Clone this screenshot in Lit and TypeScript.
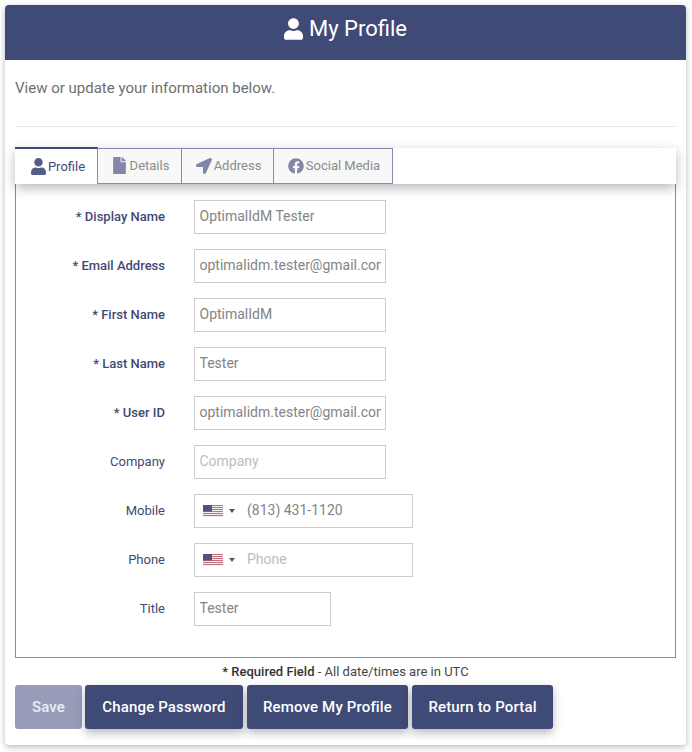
import { LitElement, html, css, svg } from "lit";
import { customElement } from "lit/decorators.js";

const USER = "M224 256c70.7 0 128-57.3 128-128S294.7 0 224 0 96 57.3 96 128s57.3 128 128 128zm89.6 32h-16.7c-22.2 10.2-46.9 16-72.9 16s-50.6-5.8-72.9-16h-16.7C60.2 288 0 348.2 0 422.4V464c0 26.5 21.5 48 48 48h352c26.5 0 48-21.5 48-48v-41.6c0-74.2-60.2-134.4-134.4-134.4z";
const FILE = "M224 136V0H24C10.7 0 0 10.7 0 24v464c0 13.3 10.7 24 24 24h336c13.3 0 24-10.7 24-24V160H248c-13.2 0-24-10.8-24-24zm160-14.1v6.1H256V0h6.1c6.4 0 12.5 2.5 17 7l97.9 98c4.5 4.5 7 10.6 7 16.9z";
const ARROW = "M444.52 3.52L28.74 195.42c-47.97 22.39-31.98 92.75 19.19 92.75h175.91v175.91c0 51.17 70.36 67.17 92.75 19.19l191.9-415.78c15.99-38.39-25.59-79.97-63.97-63.97z";
const FB = "M504 256C504 119 393 8 256 8S8 119 8 256c0 123.78 90.69 226.38 209.25 245V327.69h-63V256h63v-54.64c0-62.15 37-96.48 93.67-96.48 27.14 0 55.52 4.84 55.52 4.84v61h-31.28c-30.8 0-40.41 19.12-40.41 38.73V256h68.78l-11 71.69h-57.78V501C413.31 482.38 504 379.78 504 256z";

const icon = (d: string, vb: string, cls: string) =>
  html`<svg class=${cls} viewBox=${vb} aria-hidden="true"><path fill="currentColor" d=${d}></path></svg>`;

const flag = () => html`<svg class="flag" viewBox="0 0 20 12" aria-hidden="true">
  <rect width="20" height="12" fill="#f3eded"></rect>
  ${[0, 2, 4, 6, 8, 10].map((y) => svg`<rect y=${y} width="20" height="1" fill="#c0717f"></rect>`)}
  <rect width="9" height="6.5" fill="#50527f"></rect>
</svg>`;

interface Row {
  label: string;
  req?: boolean;
  value?: string;
  placeholder?: string;
  kind?: "phone" | "short";
}

const ROWS: Row[] = [
  { label: "Display Name", req: true, value: "OptimalIdM Tester" },
  { label: "Email Address", req: true, value: "optimalidm.tester@gmail.com" },
  { label: "First Name", req: true, value: "OptimalIdM" },
  { label: "Last Name", req: true, value: "Tester" },
  { label: "User ID", req: true, value: "optimalidm.tester@gmail.com" },
  { label: "Company", placeholder: "Company" },
  { label: "Mobile", value: "(813) 431-1120", kind: "phone" },
  { label: "Phone", placeholder: "Phone", kind: "phone" },
  { label: "Title", value: "Tester", kind: "short" },
];

@customElement("app-root")
export class AppRoot extends LitElement {
  static styles = css`
    :host {
      display: block;
      width: 692px;
      height: 752px;
      padding: 5px 6px 7px 5px;
      box-sizing: border-box;
      background: #fff;
      font-family: Roboto, "Liberation Sans", sans-serif;
      overflow: hidden;
    }
    .card {
      height: 740px;
      background: #fff;
      border-radius: 4px;
      box-shadow: 0 2px 6px rgba(0, 0, 0, 0.28);
      display: flex;
      flex-direction: column;
    }
    .head {
      height: 55px;
      box-sizing: border-box;
      padding-bottom: 9px;
      background: #3f4a76;
      border-radius: 4px 4px 0 0;
      color: #fff;
      font-size: 22px;
      display: flex;
      align-items: center;
      justify-content: center;
      gap: 6px;
    }
    .head svg {
      width: 19px;
      height: 22px;
      margin-top: 1px;
    }
    .body {
      padding: 0 10px;
      display: flex;
      flex-direction: column;
    }
    .intro {
      height: 67px;
      box-sizing: border-box;
      padding-top: 18px;
      font-size: 15px;
      line-height: 20px;
      color: #6f6f6f;
      border-bottom: 1px solid #e9e9e9;
    }
    .tabs {
      margin-top: 21px;
      height: 36px;
      display: flex;
      background: #fff;
      box-shadow: 0 4px 12px rgba(0, 0, 0, 0.28);
      position: relative;
      z-index: 1;
    }
    .tab {
      box-sizing: border-box;
      height: 36px;
      display: flex;
      align-items: center;
      justify-content: center;
      gap: 2px;
      padding: 0 0 1px 2px;
      font-size: 13px;
      color: #8c8c8c;
      background: #f8f8f8;
      border: 1px solid #868cb0;
      border-left: none;
    }
    .tab svg {
      color: #8286a8;
    }
    .tab.active {
      background: #fff;
      color: #3f4a76;
      border-top: 2px solid #3f4a76;
      border-bottom: none;
      margin-top: -1px;
      height: 37px;
      padding: 0 0 1px 4px;
    }
    .tab.active svg {
      color: #555e87;
    }
    .i-user { width: 15px; height: 17px; }
    .i-file { width: 13px; height: 17px; margin: 0 2px 0 1px; }
    .i-arrow { width: 16px; height: 16px; }
    .i-fb { width: 16px; height: 16px; }
    .panel {
      height: 474px;
      box-sizing: border-box;
      border: 1px solid #868aa6;
      border-top: none;
      padding-top: 16px;
      display: flex;
      flex-direction: column;
      gap: 15px;
    }
    .row {
      display: flex;
      align-items: center;
      height: 34px;
    }
    .label {
      width: 149px;
      box-sizing: border-box;
      padding-bottom: 2px;
      text-align: right;
      font-size: 13px;
      color: #3f4a76;
      margin-right: 29px;
    }
    .label.req {
      font-weight: 500;
    }
    .field {
      box-sizing: border-box;
      height: 34px;
      width: 192px;
      border: 1px solid #ccc;
      display: flex;
      align-items: center;
      background: #fff;
    }
    .field.phone { width: 219px; }
    .field.short { width: 137px; }
    input {
      flex: 1;
      min-width: 0;
      width: 100%;
      border: none;
      outline: none;
      background: transparent;
      padding: 0 4px 2px 4.5px;
      font: 400 14px Roboto, "Liberation Sans", sans-serif;
      color: #848484;
    }
    input::placeholder { color: #bdbdbd; opacity: 1; }
    .phone input { padding-left: 0; }
    .dial {
      display: flex;
      align-items: center;
      padding-left: 8px;
      width: 44px;
      flex: none;
      box-sizing: content-box;
    }
    .flag { width: 20px; height: 12px; display: block; }
    .caret {
      margin-left: 6px;
      width: 0;
      height: 0;
      border-left: 3px solid transparent;
      border-right: 3px solid transparent;
      border-top: 4px solid #555;
    }
    .note {
      height: 27px;
      box-sizing: border-box;
      padding-top: 6px;
      font-size: 13px;
      line-height: 15px;
      text-align: center;
      color: #444;
    }
    .note b { font-weight: 500; color: #333; }
    .actions {
      display: flex;
      gap: 4px;
    }
    button {
      height: 44px;
      border: none;
      border-radius: 3px;
      background: #3f4a76;
      color: #fff;
      font: 500 15px Roboto, "Liberation Sans", sans-serif;
      letter-spacing: 0.15px;
      padding: 0;
      box-shadow: 0 4px 10px rgba(0, 0, 0, 0.28);
    }
    button.save {
      background: #979db9;
      color: #eceef4;
      box-shadow: none;
      margin-right: -1px;
    }
  `;

  render() {
    const tabs = [
      { w: 83, label: "Profile", ic: icon(USER, "0 0 448 512", "i-user"), active: true },
      { w: 84, label: "Details", ic: icon(FILE, "0 0 384 512", "i-file") },
      { w: 92, label: "Address", ic: icon(ARROW, "0 0 512 512", "i-arrow") },
      { w: 119, label: "Social Media", ic: icon(FB, "0 0 512 512", "i-fb") },
    ];
    const btns = [
      { label: "Save", w: 67, cls: "save" },
      { label: "Change Password", w: 158 },
      { label: "Remove My Profile", w: 161 },
      { label: "Return to Portal", w: 141 },
    ];
    return html`
      <div class="card">
        <div class="head">${icon(USER, "0 0 448 512", "")}<span>My Profile</span></div>
        <div class="body">
          <div class="intro">View or update your information below.</div>
          <div class="tabs">
            ${tabs.map(
              (t) => html`<div class="tab ${t.active ? "active" : ""}" style="width:${t.w}px">${t.ic}<span>${t.label}</span></div>`
            )}
          </div>
          <div class="panel">
            ${ROWS.map(
              (r) => html`<div class="row">
                <div class="label ${r.req ? "req" : ""}">${r.req ? "* " : ""}${r.label}</div>
                <div class="field ${r.kind ?? ""}">
                  ${r.kind === "phone" ? html`<div class="dial">${flag()}<span class="caret"></span></div>` : ""}
                  <input .value=${r.value ?? ""} placeholder=${r.placeholder ?? ""} />
                </div>
              </div>`
            )}
          </div>
          <div class="note"><b>* Required Field</b> - All date/times are in UTC</div>
          <div class="actions">
            ${btns.map((b) => html`<button class=${b.cls ?? ""} style="width:${b.w}px">${b.label}</button>`)}
          </div>
        </div>
      </div>
    `;
  }
}
